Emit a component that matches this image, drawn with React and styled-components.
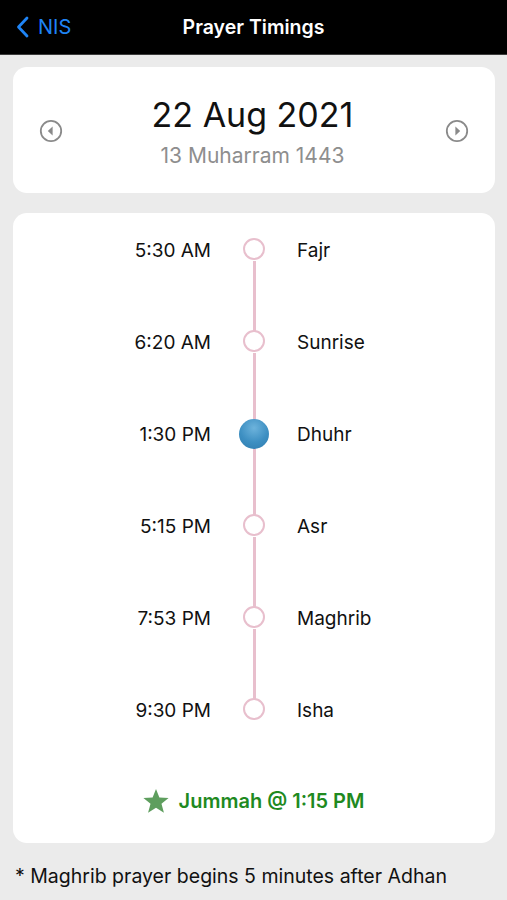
import React from 'react'
import styled, { createGlobalStyle } from 'styled-components';

const GlobalStyle = createGlobalStyle`
body {
  margin: 0;
  background: #ebebeb;
  font-family: Inter, "Liberation Sans", sans-serif;
}
`;

const Page = styled.div`
width: 507px;
height: 900px;
overflow: hidden;
background: #ebebeb;
`;

const NavBar = styled.div`
height: 54px;
background: #000;
border-bottom: 1px solid #3c3c3c;
display: grid;
grid-template-columns: 1fr auto 1fr;
align-items: center;
`;

const BackButton = styled.div`
display: flex;
align-items: center;
gap: 9px;
padding-left: 16px;
color: #1f84f5;
font-size: 20px;
`;

const NavTitle = styled.div`
color: #fff;
font-size: 19.5px;
font-weight: 600;
`;

const Content = styled.div`
padding: 12px 12px 0 13px;
display: flex;
flex-direction: column;
gap: 20px;
`;

const Card = styled.div`
background: #fff;
border-radius: 14px;
`;

const DateCard = styled(Card)`
height: 126px;
display: grid;
grid-template-columns: 76px 1fr 76px;
align-items: center;
`;

const DateBlock = styled.div`
display: flex;
flex-direction: column;
align-items: center;
padding-top: 4px;
margin-left: -3px;
`;

const BigDate = styled.div`
font-size: 34px;
color: #111;
line-height: 42px;
`;

const Hijri = styled.div`
font-size: 21px;
color: #8e8e8e;
line-height: 28px;
margin-top: 6px;
`;

const ArrowButton = styled.div`
display: flex;
justify-content: center;
padding-top: 2px;
`;

const TimesCard = styled(Card)`
padding-bottom: 6px;
`;

const Row = styled.div`
height: 92px;
display: grid;
grid-template-columns: 1fr 86px 1fr;
align-items: start;
`;

const Time = styled.div`
text-align: right;
font-size: 19px;
color: #111;
line-height: 24px;
margin-top: 26px;
`;

const Name = styled.div`
font-size: 19px;
color: #111;
line-height: 24px;
margin-top: 26px;
`;

const Node = styled.div`
position: relative;
height: 92px;
display: flex;
justify-content: center;
&::after {
  content: '';
  display: ${p => (p.$last ? 'none' : 'block')};
  position: absolute;
  left: 50%;
  margin-left: -1.5px;
  top: 48px;
  width: 3px;
  height: 70px;
  background: #e8bfcd;
}
`;

const Ring = styled.div`
margin-top: 25px;
width: 18px;
height: 18px;
border: 2.5px solid #e8bfcd;
border-radius: 50%;
background: #fff;
`;

const Ball = styled.div`
margin-top: 22px;
width: 30px;
height: 30px;
border-radius: 50%;
background: radial-gradient(circle at 50% 30%, #6db3dc 0%, #3d8fc2 55%, #2f7cae 100%);
position: relative;
z-index: 1;
`;

const Jummah = styled.div`
height: 72px;
display: flex;
align-items: center;
justify-content: center;
gap: 9px;
color: #1f8a1f;
font-size: 20px;
font-weight: 600;
padding-right: 2px;
`;

const Note = styled.div`
padding: 21px 0 0 15px;
font-size: 19.5px;
color: #111;
`;

const prayers = [
  { time: '5:30 AM', name: 'Fajr' },
  { time: '6:20 AM', name: 'Sunrise' },
  { time: '1:30 PM', name: 'Dhuhr', current: true },
  { time: '5:15 PM', name: 'Asr' },
  { time: '7:53 PM', name: 'Maghrib' },
  { time: '9:30 PM', name: 'Isha' },
];

function CircleArrow({ dir }) {
  return (
    <svg width="24" height="24" viewBox="0 0 24 24">
      <circle cx="12" cy="12" r="10.2" fill="none" stroke="#8a8a8a" strokeWidth="1.8" />
      {dir === 'left'
        ? <path d="M13.6 7.6 L8.8 12 L13.6 16.4 Z" fill="#8a8a8a" />
        : <path d="M10.4 7.6 L15.2 12 L10.4 16.4 Z" fill="#8a8a8a" />}
    </svg>
  );
}

export default function App() {
  return (
    <Page>
      <GlobalStyle />
      <NavBar>
        <BackButton>
          <svg width="13" height="22" viewBox="0 0 13 22">
            <path d="M11 2 L2.5 11 L11 20" fill="none" stroke="#1f84f5" strokeWidth="2.8" strokeLinecap="round" strokeLinejoin="round" />
          </svg>
          NIS
        </BackButton>
        <NavTitle>Prayer Timings</NavTitle>
        <div />
      </NavBar>
      <Content>
        <DateCard>
          <ArrowButton><CircleArrow dir="left" /></ArrowButton>
          <DateBlock>
            <BigDate>22 Aug 2021</BigDate>
            <Hijri>13 Muharram 1443</Hijri>
          </DateBlock>
          <ArrowButton><CircleArrow dir="right" /></ArrowButton>
        </DateCard>
        <TimesCard>
          {prayers.map((p, i) => (
            <Row key={p.name}>
              <Time>{p.time}</Time>
              <Node $last={i === prayers.length - 1}>
                {p.current ? <Ball /> : <Ring />}
              </Node>
              <Name>{p.name}</Name>
            </Row>
          ))}
          <Jummah>
            <svg width="28" height="27" viewBox="0 0 24 23">
              <path d="M12 0.8 L14.9 8.1 L22.8 8.5 L16.7 13.5 L18.8 21.2 L12 16.8 L5.2 21.2 L7.3 13.5 L1.2 8.5 L9.1 8.1 Z" fill="#5e9e5e" />
            </svg>
            Jummah @ 1:15 PM
          </Jummah>
        </TimesCard>
      </Content>
      <Note>* Maghrib prayer begins 5 minutes after Adhan</Note>
    </Page>
  )
}
